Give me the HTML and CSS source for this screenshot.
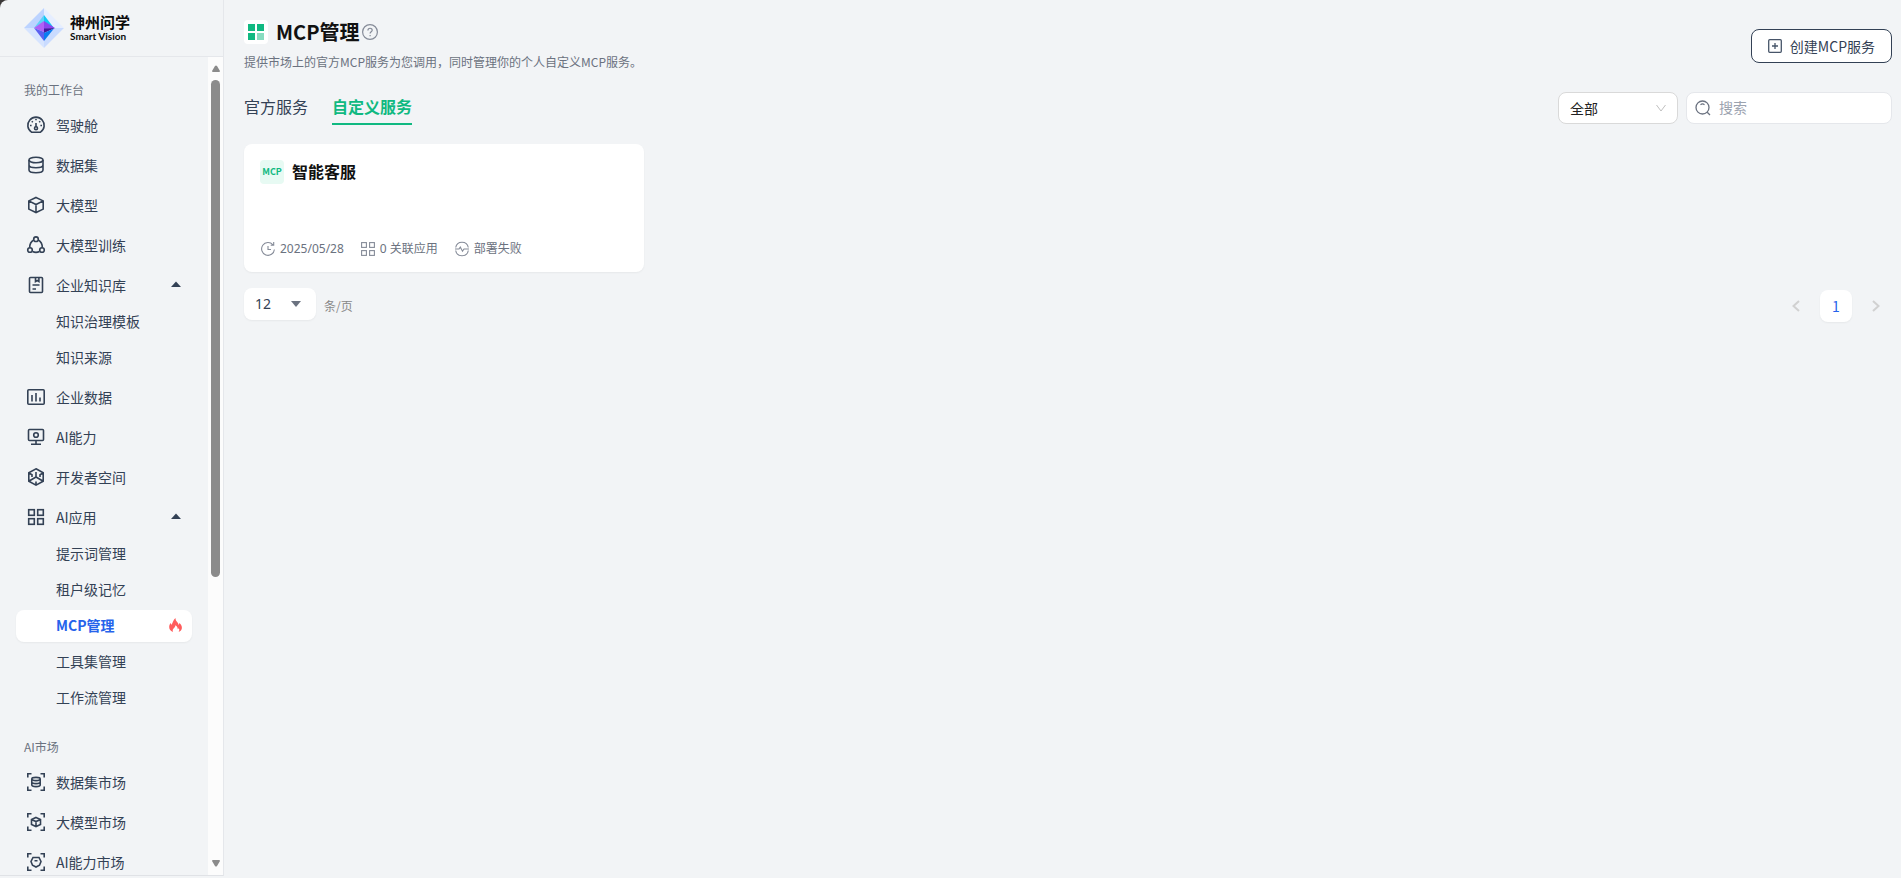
FILE: index.html
```html
<!DOCTYPE html>
<html lang="zh-CN">
<head>
    <meta charset="UTF-8">
    <meta name="viewport" content="width=device-width, initial-scale=1.0">
    <title>MCP管理</title>
    <link rel="stylesheet" href="styles.css">
</head>
<body>
    <div class="app">
        <aside class="sidebar">
            <a href="#" class="brand">
                <svg class="brand-logo" width="40" height="40" viewBox="0 0 40 40" aria-hidden="true">
                    <path d="M20 0L0 20h20z" fill="#bcd3ff"/>
                    <path d="M20 0l20 20H20z" fill="#e6eeff"/>
                    <path d="M0 20l20 20V20z" fill="#d6e4ff"/>
                    <path d="M40 20L20 40V20z" fill="#c9dbff"/>
                    <path d="M20 7L10 20l10-6z" fill="#5fd0f8"/>
                    <path d="M20 7l10 13-10-6z" fill="#12c8f5"/>
                    <path d="M20 13l-10 7 10 4z" fill="#b061f5"/>
                    <path d="M20 13l11 7-11 1z" fill="#8b45ee"/>
                    <path d="M20 20.500l11-.5-11 5z" fill="#43189b"/>
                    <path d="M10 20l10 13v-9z" fill="#5b5ff0"/>
                    <path d="M30 20.500L20 33v-8z" fill="#0a7cf0"/>
                </svg>
                <span class="brand-text">
                    <span class="brand-name">神州问学</span>
                    <span class="brand-sub">Smart Vision</span>
                </span>
            </a>
            <div class="sidebar-body">
                <nav class="nav">
                    <h2 class="nav-label">我的工作台</h2>
                    <a href="#" class="nav-item">
                        <svg class="icon" viewBox="0 0 20 20" aria-hidden="true"><path d="M5.500 17.200a8.200 8.200 0 1 1 9 0z"/><path d="M10 3.800v1.500M4 10.500h1.600M14.400 10.500H16M5.800 6.300l1 1M14.200 6.300l-1 1M10 8v4"/><circle cx="10" cy="13.300" r="1.500"/></svg>
                        驾驶舱
                    </a>
                    <a href="#" class="nav-item">
                        <svg class="icon" viewBox="0 0 20 20" aria-hidden="true"><ellipse cx="10" cy="5" rx="7" ry="2.800"/><path d="M3 5v10c0 1.500 3.100 2.700 7 2.700s7-1.200 7-2.700V5M3 10c0 1.500 3.100 2.700 7 2.700s7-1.200 7-2.700"/></svg>
                        数据集
                    </a>
                    <a href="#" class="nav-item">
                        <svg class="icon" viewBox="0 0 20 20" aria-hidden="true"><path d="M10 2.500l7.200 3.400v8.200L10 17.500l-7.200-3.400V5.900zM2.800 5.900L10 9.500l7.200-3.600M10 9.500v8"/></svg>
                        大模型
                    </a>
                    <a href="#" class="nav-item">
                        <svg class="icon" viewBox="0 0 20 20" aria-hidden="true"><circle cx="10" cy="4.200" r="2.300"/><circle cx="4" cy="15" r="2.300"/><circle cx="16" cy="15" r="2.300"/><path d="M7.700 5C5.200 6.300 3.700 9 3.700 12.600M12.300 5c2.500 1.300 4 4 4 7.600M6.500 16.500c2 1 5 1 7 0"/></svg>
                        大模型训练
                    </a>
                    <a href="#" class="nav-item">
                        <svg class="icon" viewBox="0 0 20 20" aria-hidden="true"><rect x="3.500" y="2.500" width="13" height="15" rx="1"/><path d="M9.500 3v3.500l1.700-1 1.700 1V3M6.500 10h7M6.500 14h3.500"/></svg>
                        企业知识库
                        <svg class="caret" viewBox="0 0 12 12" aria-hidden="true"><path d="M6 2.500L11 8H1z"/></svg>
                    </a>
                    <a href="#" class="nav-item sub">知识治理模板</a>
                    <a href="#" class="nav-item sub">知识来源</a>
                    <a href="#" class="nav-item">
                        <svg class="icon" viewBox="0 0 20 20" aria-hidden="true"><rect x="1.800" y="2.800" width="16.400" height="14.400" rx="1"/><path d="M6 8v6.500M10 6v8.500M14 10.500v4"/></svg>
                        企业数据
                    </a>
                    <a href="#" class="nav-item">
                        <svg class="icon" viewBox="0 0 20 20" aria-hidden="true"><rect x="2.500" y="2.500" width="15" height="11" rx="1"/><circle cx="10" cy="8" r="2.300"/><path d="M10 13.500V17M5 17.300h10"/></svg>
                        AI能力
                    </a>
                    <a href="#" class="nav-item">
                        <svg class="icon" viewBox="0 0 20 20" aria-hidden="true"><path d="M10 1.800l7.200 4v8.400l-7.200 4-7.200-4V5.800zM10 5v5M10 10l-6.800 4M10 10l6.800 4M3 6l3 1.700V10M17 6l-3 1.700V10M10 18v-3.500"/></svg>
                        开发者空间
                    </a>
                    <a href="#" class="nav-item">
                        <svg class="icon" viewBox="0 0 20 20" aria-hidden="true"><rect x="2.700" y="2.700" width="5.600" height="5.600"/><rect x="11.700" y="2.700" width="5.600" height="5.600"/><rect x="2.700" y="11.700" width="5.600" height="5.600"/><rect x="11.700" y="11.700" width="5.600" height="5.600"/></svg>
                        AI应用
                        <svg class="caret" viewBox="0 0 12 12" aria-hidden="true"><path d="M6 2.500L11 8H1z"/></svg>
                    </a>
                    <a href="#" class="nav-item sub">提示词管理</a>
                    <a href="#" class="nav-item sub">租户级记忆</a>
                    <a href="#" class="nav-item sub active" aria-current="page">
                        MCP管理
                        <svg class="flame" viewBox="0 0 13 14" aria-hidden="true"><path d="M4 14C1.200 13 0 10.800.2 8.600.3 7 1 6 1.700 5c.4.700.6 1.200.7 1.900C3.900 5 4 2.300 6.400 0c.1 2 .9 3 1.900 4.200.7.800 1.200 1.700 1.200 2.800.6-.5.800-1.200.8-2 1.700 1.300 2.700 3.100 2.600 5-.1 1.900-1.300 3.300-3.300 4 .8-1.300.9-2.600.2-3.800-.3.500-.6.800-1.100 1 .1-1.700-.7-3-2.300-3.900 0 1.300-.6 2-1.400 2.800C3.700 11.300 3.400 12.500 4 14z"/></svg>
                    </a>
                    <a href="#" class="nav-item sub">工具集管理</a>
                    <a href="#" class="nav-item sub">工作流管理</a>

                    <h2 class="nav-label">AI市场</h2>
                    <a href="#" class="nav-item">
                        <svg class="icon" viewBox="0 0 20 20" aria-hidden="true"><path d="M1.800 5.500V1.800h3.700M14.500 1.800h3.700v3.700M18.200 14.500v3.700h-3.700M5.500 18.200H1.800v-3.700"/><ellipse cx="10" cy="7" rx="4.200" ry="1.600"/><path d="M5.800 7v6c0 .9 1.900 1.600 4.200 1.600s4.200-.7 4.200-1.600V7M5.800 10c0 .9 1.900 1.600 4.200 1.600s4.200-.7 4.200-1.600"/></svg>
                        数据集市场
                    </a>
                    <a href="#" class="nav-item">
                        <svg class="icon" viewBox="0 0 20 20" aria-hidden="true"><path d="M1.800 5.500V1.800h3.700M14.500 1.800h3.700v3.700M18.200 14.500v3.700h-3.700M5.500 18.200H1.800v-3.700M10 5.500l4.500 2v5l-4.500 2-4.500-2v-5zM5.500 7.500l4.500 2 4.500-2M10 9.500v5"/></svg>
                        大模型市场
                    </a>
                    <a href="#" class="nav-item">
                        <svg class="icon" viewBox="0 0 20 20" aria-hidden="true"><path d="M1.800 5.500V1.800h3.700M14.500 1.800h3.700v3.700M18.200 14.500v3.700h-3.700M5.500 18.200H1.800v-3.700M7 5.500h6l2 4-1.500 3.700L10 15l-3.500-1.800L5 9.500zM8.500 8.800h3"/></svg>
                        AI能力市场
                    </a>
                </nav>
                <div class="scrollbar" aria-hidden="true">
                    <svg class="scroll-arrow" viewBox="0 0 10 8"><path d="M4 1q1-1 2 0l3 5q0 1-1 1H2q-1 0-1-1z"/></svg>
                    <span class="scroll-thumb"></span>
                    <svg class="scroll-arrow" viewBox="0 0 10 8"><path d="M4 7q1 1 2 0l3-5q0-1-1-1H2q-1 0-1 1z"/></svg>
                </div>
            </div>
        </aside>

        <main class="main">
            <header class="page-header">
                <div>
                    <div class="page-title">
                        <svg width="24" height="24" viewBox="0 0 24 24" aria-hidden="true"><rect width="24" height="24" rx="4" fill="#fff"/><path d="M4 4h7v7H4zM13 4h7v7h-7zM4 13h7v7H4z" fill="#10b981"/><path d="M13 13h7v7h-7z" fill="#88dcc0"/></svg>
                        <h1>MCP管理</h1>
                        <svg class="help" viewBox="0 0 16 16" aria-hidden="true"><circle cx="8" cy="8" r="7.400"/><path d="M5.900 6.500C5.900 3.500 10.200 3.600 10.200 6.200c0 1.700-2.100 1.600-2.100 3.400M8.100 10.900v1.300"/></svg>
                    </div>
                    <p class="page-desc">提供市场上的官方MCP服务为您调用，同时管理你的个人自定义MCP服务。</p>
                </div>
                <button type="button" class="create-button">
                    <svg width="14" height="14" viewBox="0 0 14 14" aria-hidden="true"><rect x=".7" y=".7" width="12.600" height="12.600" rx="1"/><path d="M7 4v6M4 7h6"/></svg>
                    创建MCP服务
                </button>
            </header>

            <div class="toolbar">
                <div class="tabs">
                    <a href="#" class="tab">官方服务</a>
                    <a href="#" class="tab active">自定义服务</a>
                </div>
                <form class="filters">
                    <div class="select-box filter-select">
                        <select aria-label="服务类型">
                            <option>全部</option>
                        </select>
                        <svg class="chevron" viewBox="0 0 10 8" aria-hidden="true"><path d="M.5 1L5 7l4.500-6"/></svg>
                    </div>
                    <label class="search-box">
                        <svg width="16" height="16" viewBox="0 0 16 16" aria-hidden="true"><circle cx="7.500" cy="7.500" r="6.500"/><path d="M12.200 12.200L15 15M5.500 4.700c1.200-.9 2.800-.9 4 0"/></svg>
                        <input type="text" placeholder="搜索" aria-label="搜索">
                    </label>
                </form>
            </div>

            <section class="card-grid">
                <article class="card">
                    <div class="card-head">
                        <span class="card-badge">MCP</span>
                        <h3>智能客服</h3>
                    </div>
                    <div class="card-meta">
                        <span class="meta">
                            <svg viewBox="0 0 16 16" aria-hidden="true"><path d="M12.900 3.800A6.400 6.400 0 1 0 14.400 8.500M13.700 1v3.200h-3M8 5v3.500h3"/></svg>
                            2025/05/28
                        </span>
                        <span class="meta">
                            <svg viewBox="0 0 16 16" aria-hidden="true"><rect x="1.600" y="1.600" width="4.800" height="4.800"/><rect x="9.600" y="1.600" width="4.800" height="4.800"/><rect x="1.600" y="9.600" width="4.800" height="4.800"/><rect x="9.600" y="9.600" width="4.800" height="4.800"/></svg>
                            0 关联应用
                        </span>
                        <span class="meta">
                            <svg viewBox="0 0 16 16" aria-hidden="true"><path d="M1.700 6.500a6.400 6.400 0 0 1 12.600 0M1.700 9.500a6.400 6.400 0 0 0 12.600 0M1 8h4l1.300-2 2.200 4.200L10 8h5"/></svg>
                            部署失败
                        </span>
                    </div>
                </article>
            </section>

            <footer class="pagination">
                <div class="page-size">
                    <div class="select-box size-select">
                        <select id="pageSize">
                            <option>12</option>
                        </select>
                        <svg class="select-arrow" viewBox="0 0 10 6" aria-hidden="true"><path d="M0 0h10L5 6z"/></svg>
                    </div>
                    <label for="pageSize">条/页</label>
                </div>
                <div class="pager">
                    <button type="button" aria-label="上一页" disabled><svg viewBox="0 0 8 12" aria-hidden="true"><path d="M7 1L1.500 6 7 11"/></svg></button>
                    <button type="button" class="current">1</button>
                    <button type="button" aria-label="下一页" disabled><svg viewBox="0 0 8 12" aria-hidden="true"><path d="M1 1l5.500 5L1 11"/></svg></button>
                </div>
            </footer>
        </main>
    </div>
</body>
</html>
```
FILE: styles.css
```css
* {
    box-sizing: border-box;
}
body {
    margin: 0;
    background-color: #3b3838;
    color: #334155;
    font-family: "Noto Sans CJK SC", "Noto Sans", sans-serif;
    font-size: 14px;
}
h1, h2, h3, p {
    margin: 0;
}
a {
    color: inherit;
    text-decoration: none;
}
button, input, select {
    font: inherit;
    color: inherit;
}
svg {
    flex-shrink: 0;
}
.app {
    display: flex;
    height: 100vh;
    background-color: #f2f4f6;
    border-top-left-radius: 8px;
}

/* sidebar */
.sidebar {
    display: flex;
    flex-direction: column;
    width: 224px;
    flex-shrink: 0;
    margin-bottom: 2px;
    border-right: 1px solid #e5e7eb;
    border-bottom: 1px solid #e0e2e6;
}
.brand {
    display: flex;
    align-items: center;
    gap: 6px;
    height: 57px;
    padding-left: 24px;
    border-bottom: 1px solid #e5e7eb;
    flex-shrink: 0;
    color: #0b0b0b;
}
.brand-text {
    display: flex;
    flex-direction: column;
    font-weight: bold;
}
.brand-name {
    font-size: 15px;
    line-height: 16px;
}
.brand-sub {
    font-family: Lato, sans-serif;
    font-size: 10px;
    line-height: 12px;
}
.sidebar-body {
    display: flex;
    flex: 1;
    min-height: 0;
}
.nav {
    flex: 1;
    padding: 0 16px;
    overflow-y: auto;
    scrollbar-width: none;
}
.nav-label {
    margin-top: 21px;
    padding-left: 8px;
    font-size: 12px;
    font-weight: normal;
    line-height: 24px;
    color: #6b7280;
}
.nav-item {
    display: flex;
    align-items: center;
    gap: 10px;
    height: 32px;
    margin-top: 8px;
    padding: 0 10px 2px;
    border-radius: 8px;
}
.nav-item.sub {
    margin-top: 4px;
    padding-left: 40px;
}
.nav-item.active {
    background-color: #fff;
    color: #2563eb;
    font-weight: bold;
    box-shadow: 0 1px 2px rgba(0, 0, 0, 0.05);
}
.icon {
    width: 20px;
    height: 20px;
    fill: none;
    stroke: #334155;
    stroke-width: 1.6;
}
.caret {
    width: 12px;
    height: 12px;
    margin-left: auto;
    fill: #334155;
}
.flame {
    width: 13px;
    height: 14px;
    margin-left: auto;
    fill: #ff5c5c;
}
.scrollbar {
    display: flex;
    flex-direction: column;
    align-items: center;
    width: 15px;
    padding: 8px 0;
    background-color: #fcfcfc;
}
.scroll-arrow {
    width: 10px;
    height: 8px;
    fill: #8b8b8b;
}
.scroll-thumb {
    width: 9px;
    height: 62%;
    margin: 7px 0 auto;
    border-radius: 5px;
    background-color: #8b8b8b;
}

/* main area */
.main {
    flex: 1;
    padding: 20px 9px 20px 20px;
}
.page-header {
    display: flex;
    justify-content: space-between;
    align-items: center;
}
.page-title {
    display: flex;
    align-items: center;
    gap: 8px;
    height: 24px;
}
.page-title h1 {
    font-size: 20px;
    line-height: 24px;
    color: #111;
}
.help {
    width: 16px;
    height: 16px;
    margin-left: -6px;
    fill: none;
    stroke: #858b98;
    stroke-width: 1.2;
}
.page-desc {
    margin-top: 8px;
    font-size: 12px;
    line-height: 20px;
    color: #6b7280;
}
.create-button {
    display: flex;
    align-items: center;
    gap: 8px;
    height: 34px;
    padding: 0 16px;
    border: 1px solid #334155;
    border-radius: 8px;
    background-color: #fff;
    cursor: pointer;
}
.create-button svg {
    fill: none;
    stroke: #475569;
    stroke-width: 1.3;
}
.toolbar {
    display: flex;
    justify-content: space-between;
    align-items: flex-start;
    margin-top: 20px;
}
.tabs {
    display: flex;
    gap: 24px;
}
.tab {
    padding: 2px 0 5px;
    border-bottom: 2px solid transparent;
    font-size: 16px;
    line-height: 24px;
}
.tab.active {
    border-color: #10b981;
    color: #10b981;
    font-weight: bold;
}
.filters {
    display: flex;
    gap: 8px;
}
.select-box {
    display: grid;
    align-items: center;
}
.select-box select,
.select-box svg {
    grid-area: 1 / 1;
}
.select-box select {
    width: 100%;
    height: 32px;
    padding: 0 11px 1px;
    border: 1px solid #d9d9d9;
    border-radius: 8px;
    background-color: #fff;
    appearance: none;
}
.select-box svg {
    justify-self: end;
    margin-right: 12px;
    pointer-events: none;
}
.filter-select {
    width: 120px;
    color: #222;
}
.chevron {
    width: 10px;
    height: 8px;
    fill: none;
    stroke: #bfbfbf;
}
.search-box {
    display: flex;
    align-items: center;
    gap: 8px;
    width: 206px;
    height: 32px;
    padding: 0 8px;
    border: 1px solid #e5e7eb;
    border-radius: 8px;
    background-color: #fff;
}
.search-box svg {
    fill: none;
    stroke: #6b7280;
    stroke-width: 1.3;
}
.search-box input {
    flex: 1;
    min-width: 0;
    padding: 0 0 2px;
    border: none;
    outline: none;
    background: none;
}
.search-box input::placeholder {
    color: #9ca3af;
}

/* service cards */
.card-grid {
    display: grid;
    grid-template-columns: repeat(4, 1fr);
    gap: 16px;
    margin-top: 19px;
}
.card {
    display: flex;
    flex-direction: column;
    justify-content: space-between;
    min-height: 128px;
    padding: 16px 16px 15px;
    border-radius: 8px;
    background-color: #fff;
    box-shadow: 0 1px 2px rgba(0, 0, 0, 0.05);
}
.card-head {
    display: flex;
    align-items: center;
    gap: 8px;
}
.card-head h3 {
    padding-bottom: 2px;
    font-size: 16px;
    line-height: 22px;
    color: #111;
}
.card-badge {
    width: 24px;
    border-radius: 4px;
    background-color: #e7faf3;
    color: #10b981;
    font-size: 9px;
    font-weight: bold;
    line-height: 24px;
    text-align: center;
}
.card-meta {
    display: flex;
    gap: 16px;
    font-family: "Noto Sans", "Noto Sans CJK SC", sans-serif;
    font-size: 12px;
    line-height: 16px;
    color: #6b7280;
}
.meta {
    display: flex;
    align-items: center;
    gap: 4px;
}
.meta svg {
    width: 16px;
    height: 16px;
    fill: none;
    stroke: #858b98;
    stroke-width: 1.1;
}

/* pagination */
.pagination {
    display: flex;
    justify-content: space-between;
    align-items: flex-start;
    margin-top: 16px;
}
.page-size {
    display: flex;
    align-items: center;
    gap: 8px;
    font-size: 12px;
    color: #888;
}
.page-size label {
    padding-top: 2px;
}
.size-select {
    width: 72px;
    font-family: "Noto Sans", sans-serif;
    font-size: 14px;
    color: #334155;
}
.size-select select {
    border: none;
    box-shadow: 0 1px 2px rgba(0, 0, 0, 0.05);
}
.size-select .select-arrow {
    width: 10px;
    height: 6px;
    margin-right: 15px;
    fill: #6b7280;
}
.pager {
    display: flex;
    align-items: center;
    gap: 8px;
    padding-top: 2px;
}
.pager button {
    display: flex;
    justify-content: center;
    align-items: center;
    width: 32px;
    height: 32px;
    padding: 0;
    border: none;
    border-radius: 8px;
    background: none;
}
.pager button.current {
    background-color: #fff;
    color: #2563eb;
    box-shadow: 0 1px 2px rgba(0, 0, 0, 0.05);
}
.pager svg {
    width: 8px;
    height: 12px;
    fill: none;
    stroke: #d1d1d1;
    stroke-width: 2;
}
```
